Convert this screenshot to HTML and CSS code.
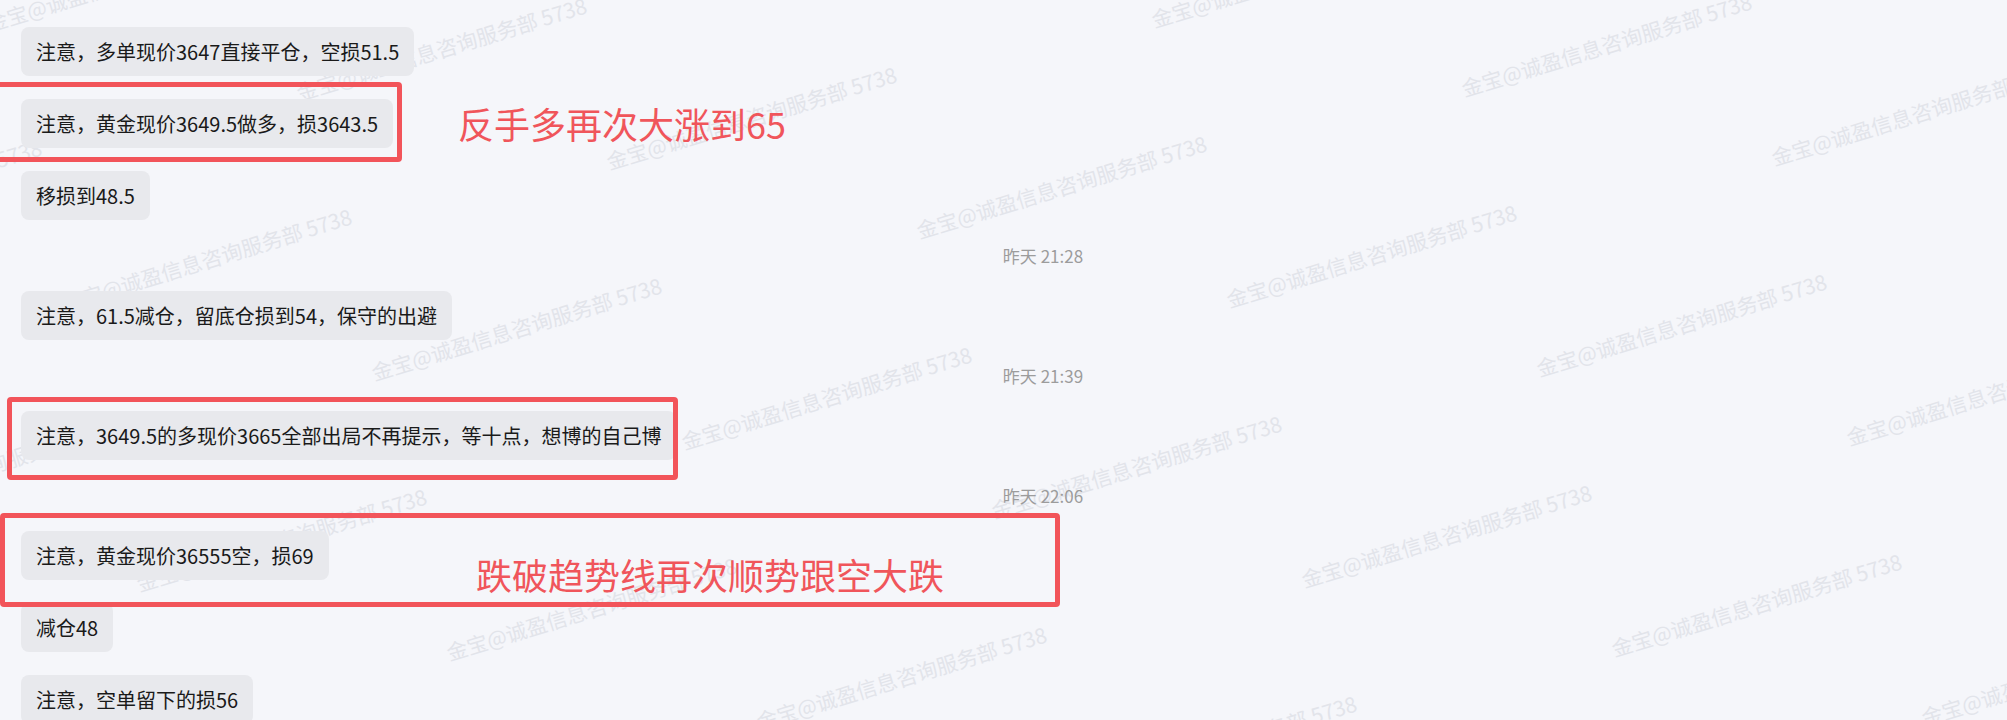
FILE: index.html
```html
<!DOCTYPE html>
<html lang="zh-CN">

<head>
    <meta charset="UTF-8" />
    <meta name="viewport" content="width=device-width, initial-scale=1.0" />
    <title>聊天记录</title>
    <link rel="stylesheet" href="styles.css">
</head>

<body>
    <div class="watermarks" id="watermarks"></div>

    <div class="chat">
        <div class="msg">注意，多单现价3647直接平仓，空损51.5</div>
        <div class="msg">注意，黄金现价3649.5做多，损3643.5</div>
        <div class="msg">移损到48.5</div>
        <div class="time">昨天 21:28</div>
        <div class="msg">注意，61.5减仓，留底仓损到54，保守的出避</div>
        <div class="time">昨天 21:39</div>
        <div class="msg">注意，3649.5的多现价3665全部出局不再提示，等十点，想博的自己博</div>
        <div class="time">昨天 22:06</div>
        <div class="msg">注意，黄金现价36555空，损69</div>
        <div class="msg">减仓48</div>
        <div class="msg">注意，空单留下的损56</div>
    </div>

    <!-- hand drawn marks on top of the screenshot -->
    <div class="mark mark-1"></div>
    <div class="mark mark-2"></div>
    <div class="mark mark-3"></div>
    <div class="note note-1">反手多再次大涨到65</div>
    <div class="note note-2">跌破趋势线再次顺势跟空大跌</div>

    <script src="watermark.js"></script>
</body>

</html>
```

FILE: styles.css
```css
* {
    padding: 0;
    margin: 0;
    box-sizing: border-box;
    font-family: "Noto Sans CJK SC", "Liberation Sans", sans-serif;
}

body {
    background-color: #f5f6fa;
    position: relative;
    height: 720px;
    overflow: hidden;
}

.watermarks {
    position: absolute;
    top: 0;
    left: 0;
    right: 0;
    bottom: 0;
    z-index: 0;
}

.watermarks span {
    position: absolute;
    white-space: nowrap;
    font-size: 21px;
    line-height: 21px;
    color: #e2e4ea;
    transform-origin: 0 100%;
    transform: rotate(-17deg);
}

.chat {
    position: relative;
    z-index: 1;
    display: flex;
    flex-direction: column;
    align-items: flex-start;
    gap: 23px;
    padding: 27px 0 0 21px;
}

.msg {
    background-color: #e8e9ed;
    color: #1a1a1a;
    font-size: 20px;
    line-height: 31px;
    padding: 9px 15px;
    border-radius: 8px;
    white-space: nowrap;
}

.time {
    align-self: stretch;
    text-align: center;
    padding-left: 58px;
    font-size: 17px;
    line-height: 25px;
    color: #9c9c9c;
}

.mark {
    position: absolute;
    z-index: 2;
    border: 5px solid #f2545a;
    border-radius: 4px;
}

.mark-1 {
    left: -10px;
    top: 82px;
    width: 412px;
    height: 80px;
}

.mark-2 {
    left: 7px;
    top: 397px;
    width: 671px;
    height: 83px;
}

.mark-3 {
    left: 0;
    top: 513px;
    width: 1060px;
    height: 94px;
}

.note {
    position: absolute;
    z-index: 2;
    font-size: 36px;
    line-height: 36px;
    color: #f0555b;
    white-space: nowrap;
}

.note-1 {
    left: 458px;
    top: 105px;
}

.note-2 {
    left: 476px;
    top: 556px;
}
```

FILE: watermark.js
```js
// tiled watermark, same lattice as the chat client draws
const layer = document.getElementById('watermarks');
const text = '金宝@诚盈信息咨询服务部 5738';

for (let j = -3; j <= 5; j++) {
    for (let i = -5; i <= 10; i++) {
        const x = 375 + i * 310 - j * 75;
        const y = 383 + i * 69 - j * 280;
        if (x < -360 || x > 2040 || y < -20 || y > 830) continue;
        const span = document.createElement('span');
        span.textContent = text;
        span.style.left = x + 'px';
        span.style.top = (y - 21) + 'px';
        layer.appendChild(span);
    }
}
```
